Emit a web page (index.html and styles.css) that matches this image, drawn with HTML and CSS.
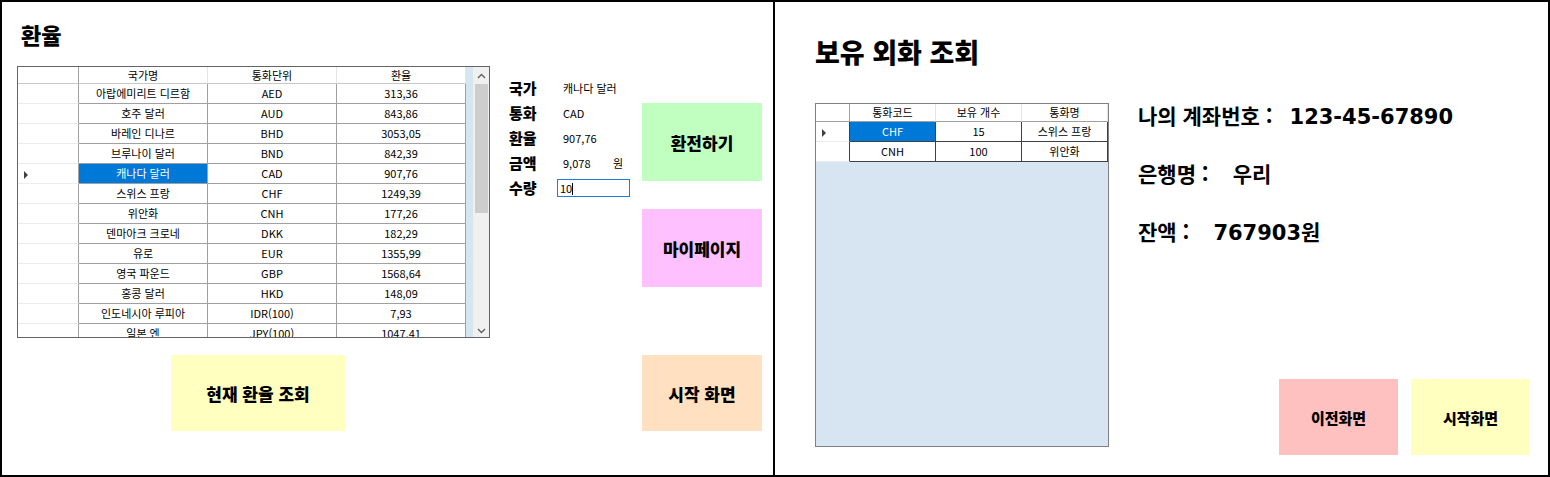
FILE: index.html
```html
<!DOCTYPE html>
<html lang="ko">

<head>
    <meta charset="UTF-8">
    <title>환율 / 보유 외화 조회</title>
    <link rel="stylesheet" href="styles.css">
</head>

<body>
    <div class="frame">
        <!-- 환율 화면 -->
        <section class="exchange">
            <h1 class="title">환율</h1>
            <div class="main">
                <div class="grid rates">
                    <div class="grid-body">
                        <table>
                            <colgroup>
                                <col class="c-head">
                                <col class="c-rate">
                                <col class="c-rate">
                                <col class="c-rate">
                            </colgroup>
                            <thead>
                                <tr>
                                    <th class="corner"></th>
                                    <th>국가명</th>
                                    <th>통화단위</th>
                                    <th>환율</th>
                                </tr>
                            </thead>
                            <tbody>
                                <tr><td class="rh"></td><td>아랍에미리트 디르함</td><td>AED</td><td>313,36</td></tr>
                                <tr><td class="rh"></td><td>호주 달러</td><td>AUD</td><td>843,86</td></tr>
                                <tr><td class="rh"></td><td>바레인 디나르</td><td>BHD</td><td>3053,05</td></tr>
                                <tr><td class="rh"></td><td>브루나이 달러</td><td>BND</td><td>842,39</td></tr>
                                <tr><td class="rh current"></td><td class="selected">캐나다 달러</td><td>CAD</td><td>907,76</td></tr>
                                <tr><td class="rh"></td><td>스위스 프랑</td><td>CHF</td><td>1249,39</td></tr>
                                <tr><td class="rh"></td><td>위안화</td><td>CNH</td><td>177,26</td></tr>
                                <tr><td class="rh"></td><td>덴마아크 크로네</td><td>DKK</td><td>182,29</td></tr>
                                <tr><td class="rh"></td><td>유로</td><td>EUR</td><td>1355,99</td></tr>
                                <tr><td class="rh"></td><td>영국 파운드</td><td>GBP</td><td>1568,64</td></tr>
                                <tr><td class="rh"></td><td>홍콩 달러</td><td>HKD</td><td>148,09</td></tr>
                                <tr><td class="rh"></td><td>인도네시아 루피아</td><td>IDR(100)</td><td>7,93</td></tr>
                                <tr><td class="rh"></td><td>일본 엔</td><td>JPY(100)</td><td>1047,41</td></tr>
                            </tbody>
                        </table>
                    </div>
                    <div class="grid-gap"></div>
                    <div class="scrollbar">
                        <span class="arrow">
                            <svg width="9" height="6" viewBox="0 0 9 6"><path d="M1 5 L4.5 1.5 L8 5" fill="none" stroke="#606060" stroke-width="1.4"/></svg>
                        </span>
                        <span class="thumb"></span>
                        <span class="arrow down">
                            <svg width="9" height="6" viewBox="0 0 9 6"><path d="M1 1 L4.5 4.5 L8 1" fill="none" stroke="#606060" stroke-width="1.4"/></svg>
                        </span>
                    </div>
                </div>

                <div class="info">
                    <span class="label">국가</span><span class="value">캐나다 달러</span>
                    <span class="label">통화</span><span class="value">CAD</span>
                    <span class="label">환율</span><span class="value">907,76</span>
                    <span class="label">금액</span><span class="value"><span class="amount">9,078</span>원</span>
                    <span class="label">수량</span><span class="field">10<i class="caret"></i></span>
                </div>

                <div class="actions">
                    <button type="button" class="btn green">환전하기</button>
                    <button type="button" class="btn pink">마이페이지</button>
                </div>
            </div>

            <div class="bottom">
                <button type="button" class="btn yellow wide">현재 환율 조회</button>
                <button type="button" class="btn peach home">시작 화면</button>
            </div>
        </section>

        <!-- 보유 외화 조회 화면 -->
        <section class="holdings">
            <h1 class="title big">보유 외화 조회</h1>
            <div class="main">
                <div class="grid owned">
                    <table>
                        <colgroup>
                            <col class="c-head2">
                            <col class="c-own">
                            <col class="c-own">
                            <col class="c-own">
                        </colgroup>
                        <thead>
                            <tr>
                                <th class="corner"></th>
                                <th>통화코드</th>
                                <th>보유 개수</th>
                                <th>통화명</th>
                            </tr>
                        </thead>
                        <tbody>
                            <tr><td class="rh current"></td><td class="selected">CHF</td><td>15</td><td>스위스 프랑</td></tr>
                            <tr><td class="rh"></td><td>CNH</td><td>100</td><td>위안화</td></tr>
                        </tbody>
                    </table>
                </div>

                <div class="account">
                    <p class="acc-row"><span>나의 계좌번호 :</span><span class="acc-value">123-45-67890</span></p>
                    <p class="acc-row"><span>은행명 :</span><span class="acc-value far">우리</span></p>
                    <p class="acc-row"><span>잔액 :</span><span class="acc-value far">767903원</span></p>

                    <div class="nav">
                        <button type="button" class="btn rose small">이전화면</button>
                        <button type="button" class="btn yellow small">시작화면</button>
                    </div>
                </div>
            </div>
        </section>
    </div>
</body>

</html>
```

FILE: styles.css
```css
* {
    box-sizing: border-box;
}

body {
    margin: 0;
    font-family: "Noto Sans CJK KR", sans-serif;
    color: #000;
    background: #fff;
}

.frame {
    display: flex;
    width: 1550px;
    height: 477px;
    border: 2px solid #000;
}

.exchange {
    width: 773px;
    border-right: 2px solid #000;
    padding: 21px 0 0 15px;
}

.holdings {
    flex: 1;
    padding: 36px 18px 0 40px;
}

.title {
    margin: 0 0 21px 4px;
    font-size: 22px;
    line-height: 22px;
    font-weight: 900;
}

.title.big {
    margin: 0 0 38px 0;
    font-size: 27px;
    line-height: 27px;
}

.main {
    display: flex;
    align-items: flex-start;
}

/* 데이터 그리드 */
.grid {
    display: flex;
    border: 1px solid #646464;
    font-size: 11px;
}

.grid table {
    border-collapse: separate;
    border-spacing: 0;
    table-layout: fixed;
}

.grid th,
.grid td {
    padding: 0;
    text-align: center;
    font-weight: normal;
    white-space: nowrap;
    overflow: hidden;
    background: #fff;
}

.rates {
    width: 473px;
    height: 272px;
}

.grid-body {
    width: 448px;
    overflow: hidden;
}

.rates table {
    width: 448px;
}

.c-head {
    width: 61px;
}

.c-rate {
    width: 129px;
}

.rates th {
    height: 17px;
    line-height: 16px;
    border-right: 1px solid #e4e4e4;
    border-bottom: 1px solid #c8c8c8;
}

.rates td {
    height: 20px;
    line-height: 19px;
    border-right: 1px solid #a0a0a0;
    border-bottom: 1px solid #a0a0a0;
}

.grid .rh {
    border-right: 1px solid #a0a0a0;
    border-bottom: 1px solid #ececec;
    text-align: left;
}

.grid .corner {
    border-right: 1px solid #a0a0a0;
}

.grid td.selected {
    background: #0078d7;
    color: #fff;
}

.rh.current::before {
    content: "";
    display: inline-block;
    margin-left: 6px;
    border-left: 4px solid #404040;
    border-top: 4px solid transparent;
    border-bottom: 4px solid transparent;
    vertical-align: middle;
}

.grid-gap {
    width: 7px;
    background: #d7e4f2;
}

.scrollbar {
    width: 16px;
    display: flex;
    flex-direction: column;
    background: #f0f0f0;
}

.arrow {
    height: 17px;
    display: flex;
    align-items: center;
    justify-content: center;
}

.arrow.down {
    margin-top: auto;
    height: 13px;
}

.thumb {
    height: 129px;
    margin: 0 1px 0 2px;
    background: #cdcdcd;
}

/* 선택 정보 */
.info {
    width: 133px;
    margin-left: 19px;
    padding-top: 9px;
    display: grid;
    grid-template-columns: 48px 1fr;
    grid-auto-rows: 25px;
    align-items: center;
}

.label {
    font-size: 15px;
    font-weight: 900;
}

.value {
    padding-left: 6px;
    font-size: 11px;
}

.amount {
    display: inline-block;
    width: 50px;
}

.field {
    width: 73px;
    height: 18px;
    border: 1px solid #1e7bd6;
    font-size: 11px;
    line-height: 16px;
    padding-left: 2px;
}

.caret {
    display: inline-block;
    width: 1px;
    height: 12px;
    background: #000;
    vertical-align: -2px;
}

/* 버튼 */
.btn {
    border: none;
    padding: 0;
    font-family: inherit;
    font-size: 17px;
    font-weight: 900;
    color: #000;
}

.actions {
    width: 120px;
    padding-top: 37px;
    display: flex;
    flex-direction: column;
    gap: 28px;
}

.actions .btn {
    height: 78px;
}

.green {
    background: #c0ffc0;
}

.pink {
    background: #ffc0ff;
}

.yellow {
    background: #ffffc0;
}

.peach {
    background: #ffe0c0;
}

.rose {
    background: #ffc0c0;
}

.bottom {
    display: flex;
    margin-top: 17px;
}

.bottom .btn {
    height: 76px;
}

.wide {
    width: 174px;
    margin-left: 154px;
}

.home {
    width: 120px;
    margin-left: 297px;
}

/* 보유 외화 그리드 */
.owned {
    width: 294px;
    height: 344px;
    border-color: #808080;
    background: #d7e4f2;
}

.owned table {
    width: 292px;
    align-self: flex-start;
}

.c-head2 {
    width: 34px;
}

.c-own {
    width: 86px;
}

.owned th {
    height: 18px;
    line-height: 17px;
    border-right: 1px solid #e4e4e4;
    border-bottom: 1px solid #a0a0a0;
}

.owned td {
    height: 20px;
    line-height: 19px;
    border-right: 1px solid #404040;
    border-bottom: 1px solid #404040;
}

.owned .rh {
    border-right: 1px solid #404040;
}

/* 계좌 정보 */
.account {
    flex: 1;
    height: 352px;
    margin-left: 29px;
    display: flex;
    flex-direction: column;
}

.acc-row {
    margin: 0 0 32px 0;
    font-size: 21px;
    line-height: 24px;
    font-weight: 700;
}

.acc-value {
    margin-left: 17px;
    font-family: "DejaVu Sans", "Noto Sans CJK KR", sans-serif;
}

.acc-value.far {
    margin-left: 24px;
}

.nav {
    margin-top: auto;
    display: flex;
    justify-content: flex-end;
    gap: 13px;
}

.nav .btn {
    width: 119px;
    height: 76px;
}

.small {
    font-size: 15px;
}
```
